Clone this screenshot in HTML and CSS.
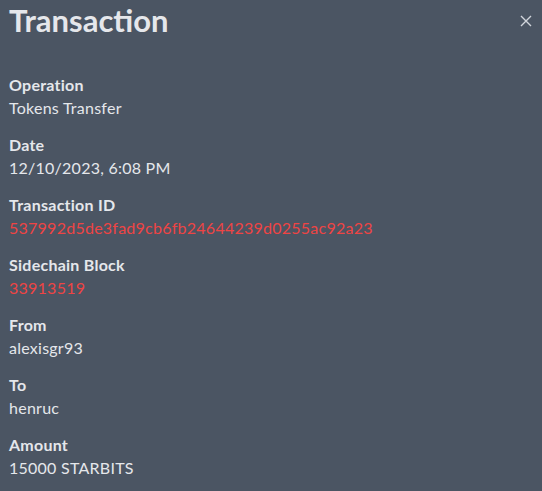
FILE: index.html
```html
<!DOCTYPE html>
<html>
<head>
<meta charset="utf-8">
<link rel="stylesheet" href="styles.css">
</head>
<body>
<div class="panel">
  <div class="header">
    <h1 class="title">Transaction</h1>
    <button class="close" aria-label="Close">
      <svg width="12" height="12" viewBox="0 0 12 12"><path d="M1 1L11 11M11 1L1 11" stroke="#d1d5db" stroke-width="1.4" fill="none"/></svg>
    </button>
  </div>
  <dl class="fields">
    <div class="field"><dt>Operation</dt><dd>Tokens Transfer</dd></div>
    <div class="field"><dt>Date</dt><dd>12/10/2023, 6:08 PM</dd></div>
    <div class="field"><dt>Transaction ID</dt><dd class="link">537992d5de3fad9cb6fb24644239d0255ac92a23</dd></div>
    <div class="field"><dt>Sidechain Block</dt><dd class="link">33913519</dd></div>
    <div class="field"><dt>From</dt><dd>alexisgr93</dd></div>
    <div class="field"><dt>To</dt><dd>henruc</dd></div>
    <div class="field"><dt>Amount</dt><dd>15000 STARBITS</dd></div>
  </dl>
</div>
</body>
</html>
```
FILE: styles.css
```css
html, body {
  margin: 0;
  padding: 0;
  background: #4b5563;
}
body {
  font-family: "Lato", "Noto Sans", sans-serif;
  color: #e5e7eb;
}
.panel {
  padding: 0 10px 0 9px;
}
.header {
  display: flex;
  justify-content: space-between;
  align-items: flex-start;
  height: 40px;
}
.title {
  margin: 0;
  font-size: 31px;
  line-height: 40px;
  font-weight: 700;
  color: #e5e7eb;
}
.close {
  background: none;
  border: 0;
  padding: 0;
  margin-top: 15px;
  width: 12px;
  height: 12px;
  display: flex;
}
.fields {
  margin: 34px 0 0;
  display: flex;
  flex-direction: column;
  gap: 15px;
}
.field dt {
  font-size: 16px;
  letter-spacing: 0.25px;
  font-weight: 700;
  line-height: 22px;
}
.field dd {
  margin: 0;
  font-size: 16px;
  letter-spacing: 0.25px;
  line-height: 23px;
}
.field dd.link {
  color: #ef4444;
}
```
